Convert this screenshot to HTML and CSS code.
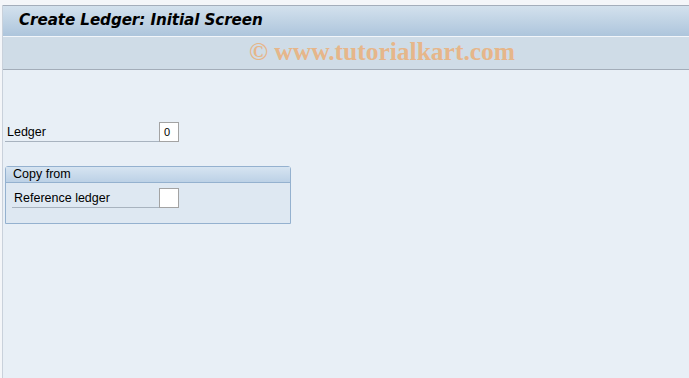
FILE: index.html
```html
<!DOCTYPE html>
<html lang="en">
	<head>
		<meta charset="UTF-8">
		<title>Create Ledger: Initial Screen</title>
		<link rel="stylesheet" href="styles.css">
	</head>
	<body>
		<div class="topstrip"></div>
		<div class="frame">
			<div class="titlebar">
				<h1>Create Ledger: Initial Screen</h1>
			</div>
			<div class="toolbar">
				<span class="mark">&copy; www.tutorialkart.com</span>
			</div>
			<div class="content">
				<div class="row first">
					<label class="lbl">Ledger</label>
					<div class="field">0</div>
				</div>
				<div class="group">
					<div class="grouphead">Copy from</div>
					<div class="groupbody">
						<div class="row">
							<label class="lbl">Reference ledger</label>
							<div class="field"></div>
						</div>
					</div>
				</div>
			</div>
		</div>
	</body>
</html>
```
FILE: styles.css
```css
html,body{
	margin:0;
	padding:0;
	height:100%;
}

body{
	background:#f4f6f9;
	font-family:"Liberation Sans",sans-serif;
	display:flex;
	flex-direction:column;
	overflow:hidden;
}

.topstrip{
	height:5px;
	background:#f4f6f9;
}

.frame{
	flex-grow:1;
	margin-left:2px;
	border-left:1px solid #c9d1db;
	display:flex;
	flex-direction:column;
	background:#e8eff6;
}

/*标题栏*/
.titlebar{
	height:30px;
	border-top:1px solid #a4aebb;
	border-bottom:1px solid #f2f6fa;
	background:linear-gradient(#d3e1ed,#adc5dc);
	display:flex;
	align-items:center;
}

.titlebar h1{
	margin:-2px 0 0 16px;
	font-family:"DejaVu Sans",sans-serif;
	font-size:15.2px;
	font-weight:bold;
	font-style:italic;
	color:#000;
	letter-spacing:-0.1px;
}

.toolbar{
	height:32px;
	background:#cfdce7;
	border-bottom:1px solid #a3adb9;
	display:flex;
	align-items:center;
	justify-content:center;
}

.mark{
	font-family:"Liberation Serif",serif;
	font-weight:bold;
	font-size:25.5px;
	color:#e6b68a;
	margin-left:72px;
	margin-top:-2px;
}

.content{
	padding:52px 0 0 2px;
}

.row{
	display:flex;
	align-items:flex-end;
	height:20px;
}

.lbl{
	width:154px;
	height:19px;
	border-bottom:1px solid #a8b3bf;
	font-size:12.5px;
	line-height:19px;
	padding-left:2px;
	box-sizing:border-box;
	color:#000;
}

.field{
	width:20px;
	height:20px;
	box-sizing:border-box;
	border:1px solid #a3a3a3;
	background:#fff;
	font-size:11px;
	line-height:18px;
	padding-left:4px;
}

/*分组框*/
.group{
	margin-top:24px;
	width:284px;
	border:1px solid #94b1cf;
	border-radius:3px 3px 0 0;
	background:#dee8f2;
}

.grouphead{
	height:15px;
	background:linear-gradient(#d6e4f1,#bcd1e6);
	border-bottom:1px solid #94b1cf;
	font-size:12.5px;
	line-height:15px;
	padding-left:7px;
	color:#000;
}

.groupbody{
	padding:5px 0 15px 6px;
}

.groupbody .lbl{
	width:147px;
}
```
